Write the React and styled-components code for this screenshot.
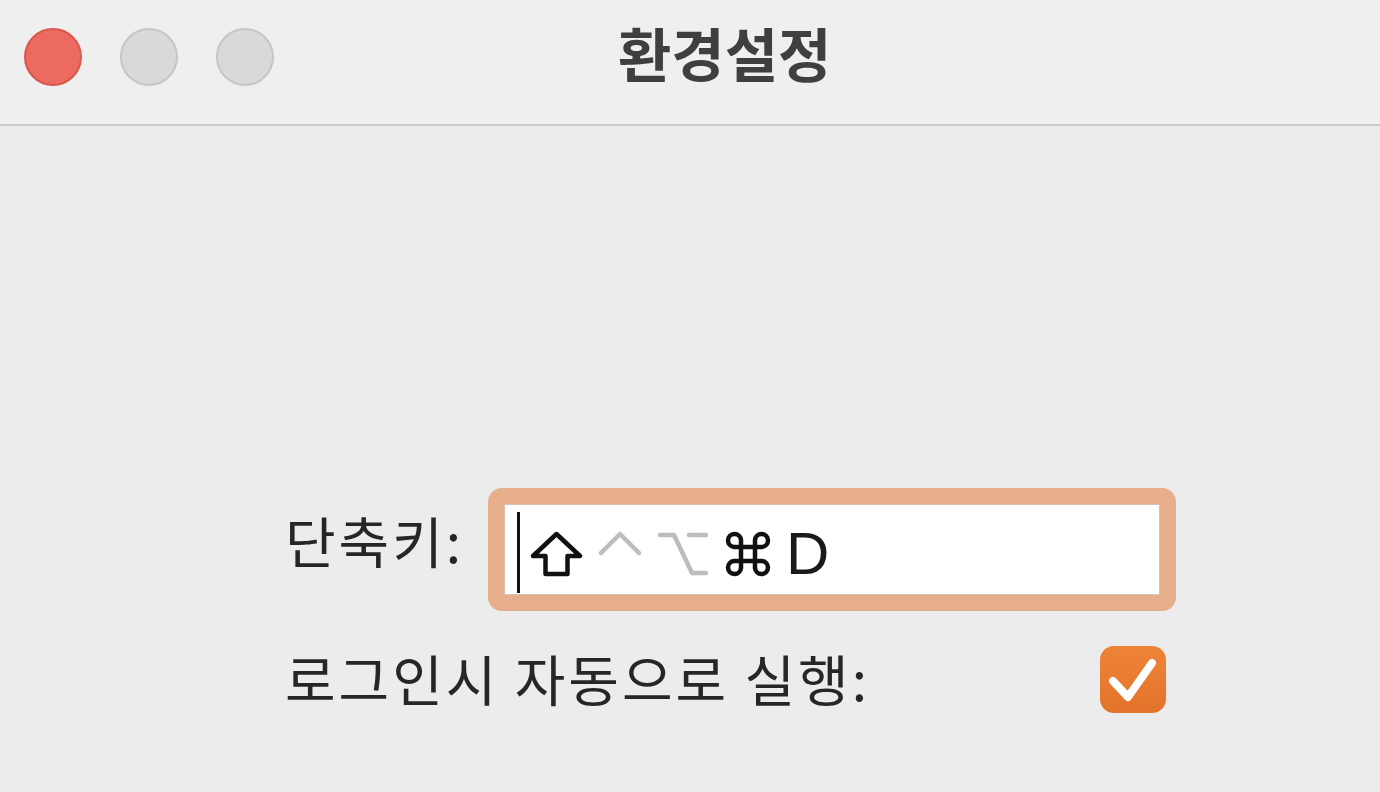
import React from "react";
import styled, { createGlobalStyle } from "styled-components";

const GlobalStyle = createGlobalStyle`
  html, body {
    margin: 0;
    padding: 0;
    background: #ececec;
  }
  body {
    font-family: "Noto Sans CJK KR", "Noto Sans", sans-serif;
  }
`;

const Window = styled.div`
  width: 1380px;
  height: 792px;
  background: #ececec;
  display: flex;
  flex-direction: column;
  overflow: hidden;
`;

const TitleBar = styled.header`
  height: 124px;
  flex-shrink: 0;
  display: flex;
  align-items: center;
  padding-left: 24px;
  background: #efefef;
  border-bottom: 2px solid #cbcbcb;
`;

const Lights = styled.div`
  display: flex;
  gap: 38px;
  margin-top: -10px;
`;

const Light = styled.span`
  width: 58px;
  height: 58px;
  box-sizing: border-box;
  border-radius: 50%;
  background: ${(p) => (p.$close ? "#ec6a5f" : "#d9d9d9")};
  border: 2px solid ${(p) => (p.$close ? "#d9574c" : "#c6c6c6")};
`;

const Title = styled.h1`
  margin: -20px 0 0 344px;
  font-size: 58px;
  font-weight: 700;
  color: #3f3f3f;
`;

const Content = styled.main`
  flex: 1;
  padding: 362px 0 0 285px;
`;

const Form = styled.div`
  width: 891px;
  display: flex;
  flex-direction: column;
  gap: 30px;
`;

const Row = styled.div`
  display: flex;
  align-items: center;
  justify-content: ${(p) => (p.$spread ? "space-between" : "flex-start")};
`;

const Label = styled.span`
  width: ${(p) => (p.$w ? `${p.$w}px` : "auto")};
  font-size: 55px;
  color: #262626;
  letter-spacing: 3px;
  margin-top: ${(p) => (p.$up ? "-22px" : "-4px")};
`;

const Ring = styled.div`
  flex: 1;
  height: 123px;
  box-sizing: border-box;
  padding: 16px;
  border-radius: 14px;
  background: #e6ae8a;
`;

const Field = styled.div`
  height: 100%;
  box-sizing: border-box;
  background: #fff;
  border: 1px solid #d9c2b2;
  display: flex;
  align-items: center;
  padding-left: 12px;
`;

const Caret = styled.span`
  width: 3px;
  height: 81px;
  margin-top: 6px;
  background: #111;
`;

const Keys = styled.div`
  display: flex;
  align-items: center;
  margin: 8px 0 0 10px;
`;

const KeyIcon = styled.svg`
  display: block;
  margin-right: ${(p) => p.$gap}px;
  stroke: ${(p) => (p.$off ? "#bdbdbd" : "#111")};
  stroke-width: 4.5;
  fill: none;
  stroke-linejoin: round;
  stroke-linecap: round;
`;

const KeyLetter = styled.span`
  font-family: "Liberation Sans", sans-serif;
  font-size: 60px;
  line-height: 1;
  color: #1a1a1a;
`;

const Check = styled.span`
  width: 66px;
  height: 67px;
  margin-right: 10px;
  border-radius: 14px;
  background: linear-gradient(#ee8438, #e3732a);
  display: flex;
`;

export default function App() {
  return (
    <>
      <GlobalStyle />
      <Window>
        <TitleBar>
          <Lights>
            <Light $close />
            <Light />
            <Light />
          </Lights>
          <Title>환경설정</Title>
        </TitleBar>
        <Content>
          <Form>
            <Row>
              <Label $w={203} $up>단축키:</Label>
              <Ring>
                <Field>
                  <Caret />
                  <Keys>
                    <KeyIcon width="53" height="46" viewBox="0 0 53 46" $gap={15}>
                      <path d="M26.5 3 L50 25 H37.5 V43 H15.5 V25 H3 Z" />
                    </KeyIcon>
                    <KeyIcon width="44" height="46" viewBox="0 0 44 46" $gap={16} $off>
                      <path d="M3 22 L22 3 L41 22" />
                    </KeyIcon>
                    <KeyIcon width="50" height="46" viewBox="0 0 50 46" $gap={17} $off>
                      <path d="M2 4 H16 L34 42 H48 M31 4 H48" />
                    </KeyIcon>
                    <KeyIcon width="46" height="46" viewBox="0 0 46 46" $gap={15}>
                      <path d="M16 16 V9 A6.5 6.5 0 1 0 9 16 H37 A6.5 6.5 0 1 0 30 9 V37 A6.5 6.5 0 1 0 37 30 H9 A6.5 6.5 0 1 0 16 37 Z" />
                    </KeyIcon>
                    <KeyLetter>D</KeyLetter>
                  </Keys>
                </Field>
              </Ring>
            </Row>
            <Row $spread>
              <Label>로그인시 자동으로 실행:</Label>
              <Check>
                <svg width="66" height="67" viewBox="0 0 66 67">
                  <path
                    d="M13 35 L28 51 L52 17"
                    fill="none"
                    stroke="#fff"
                    strokeWidth="8"
                    strokeLinecap="round"
                    strokeLinejoin="round"
                  />
                </svg>
              </Check>
            </Row>
          </Form>
        </Content>
      </Window>
    </>
  );
}
